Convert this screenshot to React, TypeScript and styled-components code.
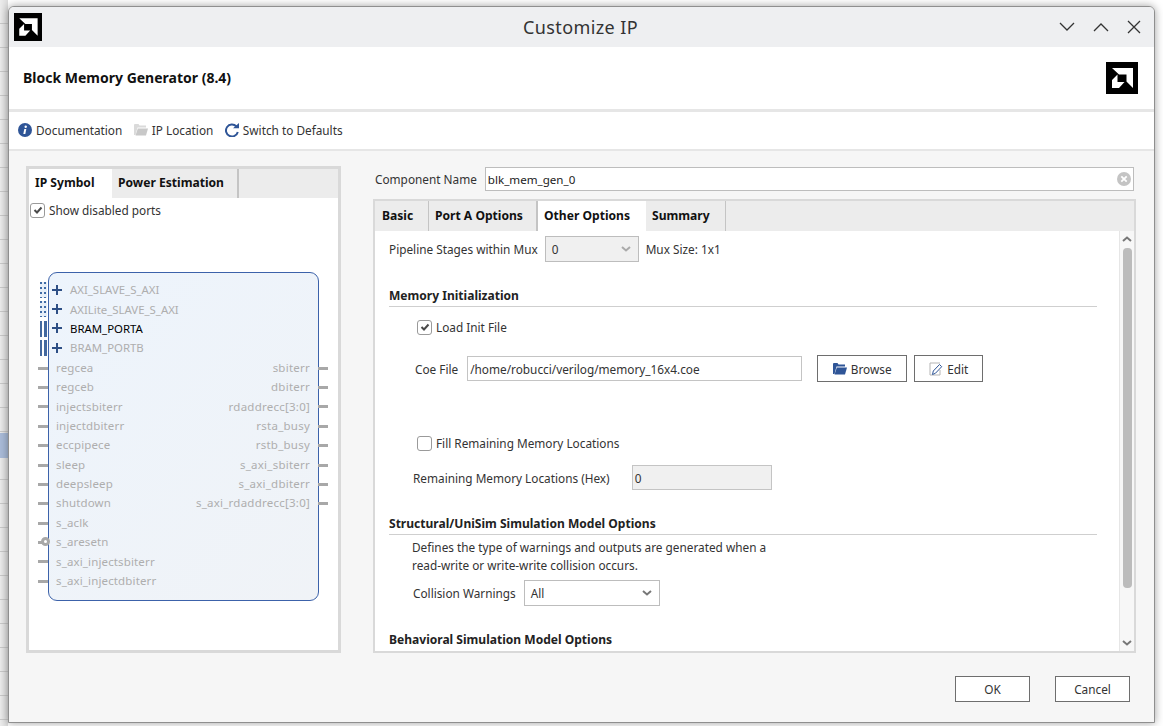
import React from 'react';
import styled, { createGlobalStyle } from 'styled-components';

const GlobalStyle = createGlobalStyle`
  html, body {
    margin: 0;
    padding: 0;
    height: 100%;
    overflow: hidden;
    background: #ffffff;
  }
  body {
    font-family: 'Noto Sans', 'Open Sans', sans-serif;
    font-size: 11.8px;
    color: #222;
  }
`;

const Desktop = styled.div`
  width: 1163px;
  height: 726px;
  overflow: hidden;
  padding: 6px 0 0 8px;
  box-sizing: border-box;
  background:
    linear-gradient(to bottom, transparent 433px, #a9bbd8 433px, #a9bbd8 458px, transparent 458px) 0 0 / 8px 100% no-repeat,
    repeating-linear-gradient(to bottom, transparent 0 23px, #c8c8c8 23px 24px) 0 0 / 8px 100% no-repeat,
    linear-gradient(to right, #ececec, #dcdcdc) 0 0 / 8px 100% no-repeat,
    #fff;
`;

const Window = styled.div`
  width: 1147px;
  height: 717px;
  box-sizing: border-box;
  display: flex;
  flex-direction: column;
  border: 1px solid #8f8f8f;
  border-radius: 6px 6px 0 0;
  background: #f6f6f6;
  box-shadow: 0 0 9px rgba(0, 0, 0, 0.38);
  overflow: hidden;
`;

const TitleBar = styled.div`
  height: 40px;
  flex: none;
  display: flex;
  align-items: center;
  justify-content: space-between;
  padding: 0 13px 0 5px;
  background: #eeeff1;
  position: relative;
`;

const WindowTitle = styled.div`
  position: absolute;
  left: -1px;
  right: 1px;
  text-align: center;
  font-size: 18px;
  color: #333;
  letter-spacing: 0.4px;
`;

const WindowButtons = styled.div`
  display: flex;
  gap: 18px;
  align-items: center;
  color: #333;
`;

const Header = styled.div`
  height: 62px;
  flex: none;
  display: flex;
  align-items: center;
  justify-content: space-between;
  padding: 0 16px 0 14px;
  background: #fff;
  border-bottom: 3px solid #e6e6e6;
`;

const HeaderTitle = styled.div`
  font-weight: 700;
  font-size: 14px;
  color: #111;
  margin-top: -2px;
`;

const Toolbar = styled.div`
  height: 35px;
  flex: none;
  box-sizing: border-box;
  display: flex;
  align-items: center;
  gap: 11.5px;
  padding: 0 0 2px 9px;
  background: #fff;
  border-bottom: 2px solid #e6e6e6;
  box-sizing: content-box;
`;

const ToolItem = styled.div`
  display: flex;
  align-items: center;
  gap: 4px;
  color: #333;
`;

const Body = styled.div`
  flex: 1;
  min-height: 0;
  display: flex;
  gap: 32px;
  padding: 15px 18px 0 17px;
  align-items: flex-start;
`;

const LeftPanel = styled.div`
  width: 315px;
  height: 487px;
  flex: none;
  box-sizing: border-box;
  border: 3px solid #d9d9d9;
  background: #fff;
  display: flex;
  flex-direction: column;
`;

const TabStrip = styled.div<{ $h: number }>`
  height: ${(p) => p.$h}px;
  flex: none;
  display: flex;
  background: #ececec;
`;

const Tab = styled.div<{ $active?: boolean; $w: number; $sep?: number; $pad?: number }>`
  width: ${(p) => p.$w}px;
  box-sizing: border-box;
  display: flex;
  align-items: center;
  padding-left: ${(p) => p.$pad ?? 6}px;
  padding-bottom: 2px;
  font-weight: 700;
  font-size: 12.1px;
  color: #111;
  background: ${(p) => (p.$active ? '#fff' : 'transparent')};
  border-right: ${(p) => (p.$sep ? `${p.$sep}px solid #c4c4c4` : 'none')};
`;

const CheckRow = styled.label<{ $indent?: number; $top?: number }>`
  display: flex;
  align-items: center;
  gap: 4px;
  height: 16px;
  margin-left: ${(p) => p.$indent ?? 0}px;
  margin-top: ${(p) => p.$top ?? 0}px;
  color: #333;
`;

const CheckBox = styled.span`
  width: 15px;
  height: 15px;
  flex: none;
  box-sizing: border-box;
  display: flex;
  align-items: center;
  justify-content: center;
  border: 1.5px solid #9a9a9a;
  border-radius: 3px;
  background: #fff;
`;

const SymbolBox = styled.div`
  margin: 54px 0 0 19px;
  width: 271px;
  height: 329px;
  box-sizing: border-box;
  border: 1px solid #3c62aa;
  border-radius: 9px;
  background: linear-gradient(135deg, #edf4fc 0%, #f0f3f7 100%);
  padding: 7px 8px 0 7px;
  display: flex;
  flex-direction: column;
`;

const BusRow = styled.div<{ $on?: boolean }>`
  height: 19.4px;
  display: flex;
  align-items: center;
  gap: 8px;
  position: relative;
  font-size: 11.4px;
  color: ${(p) => (p.$on ? '#000' : '#aeaeae')};
`;

const BusStub = styled.span<{ $solid?: boolean }>`
  position: absolute;
  left: -16px;
  top: 2px;
  width: 7px;
  height: 16px;
  background: ${(p) =>
    p.$solid
      ? 'linear-gradient(to right, #44699f 0 2.5px, transparent 2.5px 4.5px, #44699f 4.5px 7px)'
      : `linear-gradient(to bottom, #3f6aa5 0 2px, transparent 2px) 0 0 / 2px 5px repeat-y,
         linear-gradient(to bottom, #3f6aa5 0 2px, transparent 2px) 4px 0 / 2px 5px repeat-y,
         #e6eef8`};
`;

const Plus = styled.span`
  position: relative;
  width: 10px;
  height: 10px;
  flex: none;
  margin-left: -4px;
  background: linear-gradient(#2e4f85, #2e4f85) center / 10px 2px no-repeat,
    linear-gradient(#2e4f85, #2e4f85) center / 2px 10px no-repeat;
`;

const PortRows = styled.div`
  display: flex;
  justify-content: space-between;
`;

const PortColumn = styled.div`
  display: flex;
  flex-direction: column;
`;

const Port = styled.div<{ $right?: boolean; $inv?: boolean }>`
  height: 19.4px;
  display: flex;
  align-items: center;
  justify-content: ${(p) => (p.$right ? 'flex-end' : 'flex-start')};
  position: relative;
  color: #aeaeae;
  font-size: 11.5px;
  letter-spacing: ${(p) => (p.$right ? 0.24 : 0.14)}px;

  &::before {
    content: '';
    position: absolute;
    top: 9px;
    height: 3px;
    width: 10px;
    background: #a8a8a8;
    ${(p) => (p.$right ? 'right: -18px;' : 'left: -18px;')}
  }
  ${(p) =>
    p.$inv
      ? `&::after {
    content: '';
    position: absolute;
    left: -15px;
    top: 5px;
    width: 3px;
    height: 3px;
    border: 3px solid #a8a8a8;
    border-radius: 50%;
    background: #fff;
  }`
      : ''}
`;

const RightColumn = styled.div`
  width: 763px;
  flex: none;
  display: flex;
  flex-direction: column;
`;

const NameRow = styled.div`
  display: flex;
  align-items: center;
  height: 24px;
  gap: 8px;
  padding-left: 2px;
  margin-top: 1px;
  color: #333;
`;

const NameInput = styled.div`
  width: 649px;
  height: 24px;
  box-sizing: border-box;
  border: 1px solid #bdbdbd;
  background: #fff;
  display: flex;
  align-items: center;
  justify-content: space-between;
  padding: 0 2px;
  font-size: 11.6px;
  color: #222;
`;

const OptionsPanel = styled.div`
  margin-top: 8px;
  height: 454px;
  box-sizing: border-box;
  border: 2px solid #d9d9d9;
  background: #fff;
  display: flex;
  flex-direction: column;
  overflow: hidden;
`;

const ScrollArea = styled.div`
  flex: 1;
  min-height: 0;
  display: flex;
  overflow: hidden;
`;

const Form = styled.div`
  width: 744px;
  flex: none;
  box-sizing: border-box;
  padding: 5px 22px 0 14px;
  display: flex;
  flex-direction: column;
`;

const Row = styled.div<{ $indent?: number; $top?: number; $gap?: number }>`
  display: flex;
  align-items: center;
  gap: ${(p) => p.$gap ?? 7}px;
  margin-left: ${(p) => p.$indent ?? 0}px;
  margin-top: ${(p) => p.$top ?? 0}px;
  color: #333;
`;

const ButtonGroup = styled.div`
  display: flex;
  gap: 7px;
  margin-left: 6px;
`;

const Section = styled.div<{ $top: number }>`
  margin-top: ${(p) => p.$top}px;
  height: 21px;
  box-sizing: border-box;
  font-weight: 700;
  font-size: 12.05px;
  color: #222;
  border-bottom: 1px solid #cfcfcf;
`;

const LastSection = styled(Section)`
  border-bottom: none;
`;

const Select = styled.div<{ $w: number; $disabled?: boolean }>`
  width: ${(p) => p.$w}px;
  height: 26px;
  box-sizing: border-box;
  border: 1px solid #bdbdbd;
  background: ${(p) => (p.$disabled ? '#f0f0f0' : '#fff')};
  display: flex;
  align-items: center;
  justify-content: space-between;
  padding: 0 7px 0 6px;
  color: #333;
`;

const TextField = styled.div<{ $w: number; $disabled?: boolean }>`
  width: ${(p) => p.$w}px;
  height: 25px;
  box-sizing: border-box;
  border: 1px solid #c4c4c4;
  background: ${(p) => (p.$disabled ? '#f0f0f0' : '#fff')};
  display: flex;
  align-items: center;
  padding-left: 2px;
  color: #333;
`;

const Button = styled.div<{ $w: number; $h?: number }>`
  width: ${(p) => p.$w}px;
  height: ${(p) => p.$h ?? 27}px;
  box-sizing: border-box;
  border: 1px solid #6e6e6e;
  background: #fff;
  display: flex;
  align-items: center;
  justify-content: center;
  gap: 4px;
  color: #333;
`;

const Description = styled.div`
  margin: 4px 0 0 23px;
  line-height: 17.4px;
  color: #333;
`;

const ScrollBar = styled.div`
  width: 15px;
  flex: none;
  background: #f7f7f7;
  border-left: 1px solid #e6e6e6;
  display: flex;
  flex-direction: column;
  align-items: center;
  padding: 5px 0 5px;
  box-sizing: border-box;

  > :last-child {
    margin-top: auto;
  }
`;

const Thumb = styled.div`
  flex: none;
  width: 9px;
  height: 340px;
  margin-top: 6px;
  background: #bcbcbc;
  border-radius: 4px;
`;

const Footer = styled.div`
  display: flex;
  justify-content: flex-end;
  gap: 25px;
  padding: 23px 6px 0 0;
`;

const AmdLogo = ({ size }: { size: number }) => (
  <svg width={size} height={size} viewBox="0 0 32 32">
    <rect width="32" height="32" fill="#000" />
    <path d="M6 6H27V26L20.500 19.500V12.500H13Z" fill="#fff" />
    <path d="M6 18L11.500 12.500V20H18.500L13 26H6Z" fill="#fff" />
  </svg>
);

const Chevron = ({ up, color = '#aaa', size = 10 }: { up?: boolean; color?: string; size?: number }) => (
  <svg width={size} height={size * 0.6} viewBox="0 0 10 6">
    <path d={up ? 'M1 5l4-3.500 4 3.500' : 'M1 1l4 3.500 4-3.500'} fill="none" stroke={color} strokeWidth="2" />
  </svg>
);

const CheckMark = () => (
  <svg width="12" height="12" viewBox="0 0 12 12">
    <path d="M2.500 6l2.500 2.500 4.500-5" fill="none" stroke="#4a4a4a" strokeWidth="2" />
  </svg>
);

const FolderIcon = ({ color, back }: { color: string; back?: string }) => (
  <svg width="14" height="13" viewBox="0 0 14 13">
    <path d="M0 2a1 1 0 0 1 1-1h3.500l1 1.500H12v2H3.500L1.500 12H0Z" fill={back ?? color} />
    <path d="M3.800 5.500H14L12 12.500H1.500Z" fill={color} />
  </svg>
);

const busPorts = [
  { name: 'AXI_SLAVE_S_AXI', solid: false, on: false },
  { name: 'AXILite_SLAVE_S_AXI', solid: false, on: false },
  { name: 'BRAM_PORTA', solid: true, on: true },
  { name: 'BRAM_PORTB', solid: true, on: false },
];

const leftPorts = [
  'regcea', 'regceb', 'injectsbiterr', 'injectdbiterr', 'eccpipece', 'sleep', 'deepsleep',
  'shutdown', 's_aclk', 's_aresetn', 's_axi_injectsbiterr', 's_axi_injectdbiterr',
];

const rightPorts = [
  'sbiterr', 'dbiterr', 'rdaddrecc[3:0]', 'rsta_busy', 'rstb_busy', 's_axi_sbiterr',
  's_axi_dbiterr', 's_axi_rdaddrecc[3:0]',
];

export default function App() {
  return (
    <>
      <GlobalStyle />
      <Desktop>
        <Window>
          <TitleBar>
            <AmdLogo size={28} />
            <WindowTitle>Customize IP</WindowTitle>
            <WindowButtons>
              <svg width="16" height="10" viewBox="0 0 16 10"><path d="M1 1l7 7 7-7" fill="none" stroke="#333" strokeWidth="1.300" /></svg>
              <svg width="16" height="10" viewBox="0 0 16 10"><path d="M1 9l7-7 7 7" fill="none" stroke="#333" strokeWidth="1.300" /></svg>
              <svg width="14" height="14" viewBox="0 0 14 14"><path d="M1 1l12 12M13 1L1 13" fill="none" stroke="#333" strokeWidth="1.300" /></svg>
            </WindowButtons>
          </TitleBar>
          <Header>
            <HeaderTitle>Block Memory Generator (8.4)</HeaderTitle>
            <AmdLogo size={32} />
          </Header>
          <Toolbar>
            <ToolItem>
              <svg width="14" height="14" viewBox="0 0 14 14">
                <circle cx="7" cy="7" r="7" fill="#2f5597" />
                <path d="M6.300 6h2l-1 5h-2Z" fill="#fff" />
                <circle cx="7.700" cy="3.800" r="1.200" fill="#fff" />
              </svg>
              Documentation
            </ToolItem>
            <ToolItem>
              <FolderIcon color="#c8c8c8" back="#dadada" />
              IP Location
            </ToolItem>
            <ToolItem>
              <svg width="14" height="14" viewBox="0 0 14 14">
                <path d="M11.300 3.300A6 6 0 1 0 12.800 9" fill="none" stroke="#2f5597" strokeWidth="2" />
                <path d="M8 5.200H14V0Z" fill="#2f5597" />
              </svg>
              Switch to Defaults
            </ToolItem>
          </Toolbar>
          <Body>
            <LeftPanel>
              <TabStrip $h={29}>
                <Tab $active $w={83}>IP Symbol</Tab>
                <Tab $w={127} $sep={2}>Power Estimation</Tab>
              </TabStrip>
              <CheckRow $indent={1} $top={4}>
                <CheckBox><CheckMark /></CheckBox>
                Show disabled ports
              </CheckRow>
              <SymbolBox>
                {busPorts.map((b) => (
                  <BusRow key={b.name} $on={b.on}>
                    <BusStub $solid={b.solid} />
                    <Plus />
                    {b.name}
                  </BusRow>
                ))}
                <PortRows>
                  <PortColumn>
                    {leftPorts.map((name) => (
                      <Port key={name} $inv={name === 's_aresetn'}>{name}</Port>
                    ))}
                  </PortColumn>
                  <PortColumn>
                    {rightPorts.map((name) => (
                      <Port key={name} $right>{name}</Port>
                    ))}
                  </PortColumn>
                </PortRows>
              </SymbolBox>
            </LeftPanel>
            <RightColumn>
              <NameRow>
                Component Name
                <NameInput>
                  blk_mem_gen_0
                  <svg width="14" height="14" viewBox="0 0 14 14">
                    <circle cx="7" cy="7" r="7" fill="#c4c4c4" />
                    <path d="M4.300 4.300l5.400 5.400M9.700 4.300l-5.400 5.400" stroke="#fff" strokeWidth="1.800" />
                  </svg>
                </NameInput>
              </NameRow>
              <OptionsPanel>
                <TabStrip $h={30}>
                  <Tab $w={54} $sep={1} $pad={7}>Basic</Tab>
                  <Tab $w={109} $sep={2}>Port A Options</Tab>
                  <Tab $active $w={108}>Other Options</Tab>
                  <Tab $w={80} $sep={1}>Summary</Tab>
                </TabStrip>
                <ScrollArea>
                  <Form>
                    <Row>
                      Pipeline Stages within Mux
                      <Select $w={94} $disabled>0<Chevron /></Select>
                      <span>Mux Size: 1x1</span>
                    </Row>
                    <Section $top={25}>Memory Initialization</Section>
                    <CheckRow $indent={28} $top={12}>
                      <CheckBox><CheckMark /></CheckBox>
                      Load Init File
                    </CheckRow>
                    <Row $indent={26} $top={20} $gap={9}>
                      Coe File
                      <TextField $w={335}>/home/robucci/verilog/memory_16x4.coe</TextField>
                      <ButtonGroup>
                        <Button $w={90}><FolderIcon color="#2f5597" />Browse</Button>
                        <Button $w={69}>
                          <svg width="14" height="14" viewBox="0 0 14 14">
                            <path d="M11 1H1v12h10V8" fill="none" stroke="#b5b5b5" />
                            <path d="M3.500 12.500l.8-3.500 6.200-6.500 2.200 2.200-6.200 6.500Z" fill="#fff" stroke="#2f5597" />
                          </svg>
                          Edit
                        </Button>
                      </ButtonGroup>
                    </Row>
                    <CheckRow $indent={28} $top={53}>
                      <CheckBox />
                      Fill Remaining Memory Locations
                    </CheckRow>
                    <Row $indent={24} $top={14} $gap={22}>
                      Remaining Memory Locations (Hex)
                      <TextField $w={140} $disabled>0</TextField>
                    </Row>
                    <Section $top={25}>Structural/UniSim Simulation Model Options</Section>
                    <Description>
                      Defines the type of warnings and outputs are generated when a
                      <br />
                      read-write or write-write collision occurs.
                    </Description>
                    <Row $indent={24} $top={6} $gap={8}>
                      Collision Warnings
                      <Select $w={136}>All<Chevron color="#777" /></Select>
                    </Row>
                    <LastSection $top={25}>Behavioral Simulation Model Options</LastSection>
                  </Form>
                  <ScrollBar>
                    <Chevron up color="#777" />
                    <Thumb />
                    <Chevron color="#777" />
                  </ScrollBar>
                </ScrollArea>
              </OptionsPanel>
              <Footer>
                <Button $w={75} $h={26}>OK</Button>
                <Button $w={75} $h={26}>Cancel</Button>
              </Footer>
            </RightColumn>
          </Body>
        </Window>
      </Desktop>
    </>
  );
}
